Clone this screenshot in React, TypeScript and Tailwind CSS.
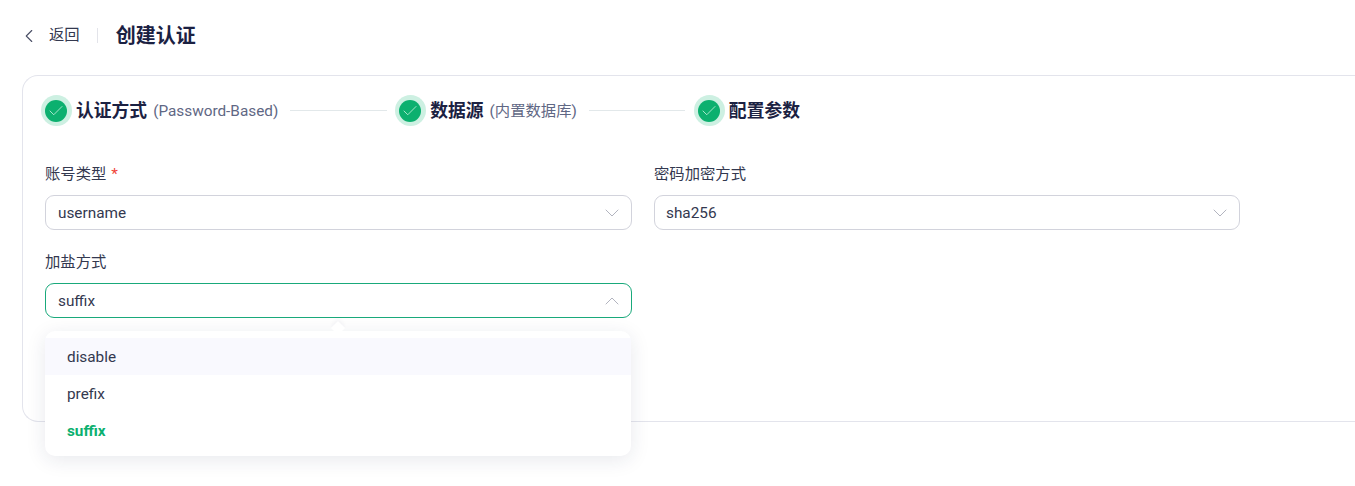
import React from "react";
import { ChevronDown, ChevronLeft, ChevronUp, Check } from "lucide-react";

const FONT = "font-['Roboto','Noto_Sans_CJK_SC',sans-serif]";

const StepIcon = () => (
  <span className="flex h-[31px] w-[31px] shrink-0 items-center justify-center rounded-full bg-[#cdf0e2] pt-px pr-px">
    <span className="flex h-[22px] w-[22px] items-center justify-center rounded-full bg-[#0cb06f]">
      <Check className="h-[18px] w-[18px] text-[#c4efdd]" strokeWidth={1.1} />
    </span>
  </span>
);

const Step: React.FC<{ title: string; sub?: string }> = ({ title, sub }) => (
  <div className="flex shrink-0 items-center">
    <StepIcon />
    <span className="ml-[4px] text-[17.8px] leading-[24px] font-bold text-[#1b2142]">{title}</span>
    {sub && <span className="ml-[6px] text-[15.33px] leading-[24px] text-[#5f6784]">{sub}</span>}
  </div>
);

const Field: React.FC<{
  label: string;
  value: string;
  required?: boolean;
  open?: boolean;
  className?: string;
  valueClassName?: string;
  children?: React.ReactNode;
}> = ({ label, value, required, open, className = "w-[587px]", valueClassName = "", children }) => (
  <div className={`relative ${className}`}>
    <div className="h-[22px] text-[15.33px] leading-[24px] text-[#33384f]">
      {label}
      {required && <span className="ml-[5px] text-[#f04438]">*</span>}
    </div>
    <div
      className={`mt-[11px] flex h-[35px] items-center justify-between rounded-[9px] border pt-[2px] pr-[7px] pl-[12px] text-[15.33px] text-[#33384f] ${
        open ? "border-[#19a97b]" : "border-[#d2d3dc]"
      }`}
    >
      <span className={valueClassName}>{value}</span>
      {open ? (
        <ChevronUp className="-mt-[2px] h-[24px] w-[24px] text-[#a9abb8]" strokeWidth={0.9} />
      ) : (
        <ChevronDown className="-mt-[2px] h-[24px] w-[24px] text-[#a9abb8]" strokeWidth={0.9} />
      )}
    </div>
    {children}
  </div>
);

const options = ["disable", "prefix", "suffix"];

export default function App() {
  return (
    <div className={`h-[486px] w-[1355px] overflow-hidden bg-white ${FONT}`}>
      <div className="flex h-[75px] items-center pb-[4px] pl-[18px]">
        <ChevronLeft className="h-[22px] w-[22px] text-[#4a4f66]" strokeWidth={1.2} />
        <span className="ml-[9px] text-[15.33px] text-[#33384f]">返回</span>
        <span className="mr-[18px] ml-[17px] h-[15px] w-px bg-[#e3e4ea]" />
        <h1 className="text-[20px] font-bold text-[#1b2142]">创建认证</h1>
      </div>
      <div className="ml-[22px] h-[347px] w-[1400px] rounded-l-[16px] border border-r-0 border-[#e3e4ec] pt-[19px] pl-[18px]">
        <div className="flex h-[31px] items-center">
          <Step title="认证方式" sub="(Password-Based)" />
          <span className="mr-[8px] ml-[12px] h-px w-[97px] bg-[#e2e8ea]" />
          <Step title="数据源" sub="(内置数据库)" />
          <span className="mr-[9px] ml-[12px] h-px w-[96px] bg-[#e2e8ea]" />
          <Step title="配置参数" />
        </div>
        <div className="mt-[36px] ml-[4px] flex gap-[22px]">
          <Field label="账号类型" value="username" required />
          <Field label="密码加密方式" value="sha256" className="w-[586px]" valueClassName="-ml-px" />
        </div>
        <div className="mt-[20px] ml-[4px]">
          <Field label="加盐方式" value="suffix" open>
            <span className="absolute top-[73px] left-[288px] z-20 h-[10px] w-[10px] rotate-45 bg-white shadow-[-2px_-2px_4px_rgba(30,35,80,0.04)]" />
            <ul className="absolute top-[81px] left-0 z-10 w-[586px] rounded-[10px] bg-white py-[7px] shadow-[0_4px_20px_rgba(30,35,80,0.10)]">
              {options.map((o) => (
                <li
                  key={o}
                  className={`flex h-[37px] items-center pt-[2px] pl-[22px] text-[15.33px] ${
                    o === "disable" ? "bg-[#f9f9fe]" : ""
                  } ${o === "suffix" ? "font-bold text-[#0cb06f]" : "text-[#33384f]"}`}
                >
                  {o}
                </li>
              ))}
            </ul>
          </Field>
        </div>
      </div>
    </div>
  );
}
